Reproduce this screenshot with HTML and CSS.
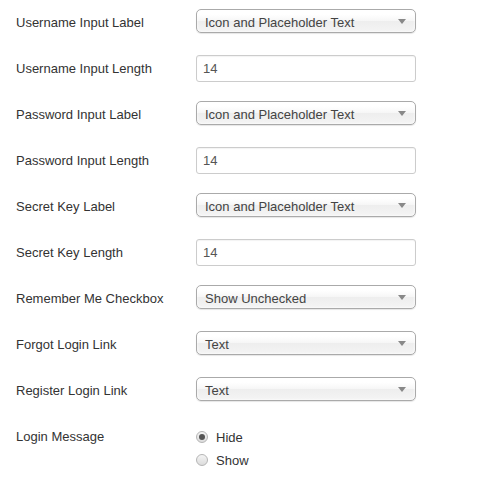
FILE: index.html
```html
<!DOCTYPE html>
<html>
<head>
<meta charset="utf-8">
<link rel="stylesheet" href="styles.css">
</head>
<body>
<form class="form">
  <div class="row sel"><div class="label">Username Input Label</div><div class="select"><span>Icon and Placeholder Text</span><i class="arrow"></i></div></div>
  <div class="row"><div class="label">Username Input Length</div><div class="input">14</div></div>
  <div class="row sel"><div class="label">Password Input Label</div><div class="select"><span>Icon and Placeholder Text</span><i class="arrow"></i></div></div>
  <div class="row"><div class="label">Password Input Length</div><div class="input">14</div></div>
  <div class="row sel"><div class="label">Secret Key Label</div><div class="select"><span>Icon and Placeholder Text</span><i class="arrow"></i></div></div>
  <div class="row"><div class="label">Secret Key Length</div><div class="input">14</div></div>
  <div class="row sel"><div class="label">Remember Me Checkbox</div><div class="select"><span>Show Unchecked</span><i class="arrow"></i></div></div>
  <div class="row sel"><div class="label">Forgot Login Link</div><div class="select"><span>Text</span><i class="arrow"></i></div></div>
  <div class="row sel"><div class="label">Register Login Link</div><div class="select"><span>Text</span><i class="arrow"></i></div></div>
  <div class="row radio-row">
    <div class="label">Login Message</div>
    <div class="radios">
      <div class="radio"><span class="dot checked"></span>Hide</div>
      <div class="radio"><span class="dot"></span>Show</div>
    </div>
  </div>
</form>
</body>
</html>
```
FILE: styles.css
```css
html, body {
  margin: 0;
  padding: 0;
  background: #fff;
}
body {
  font-family: "Liberation Sans", Arial, sans-serif;
  font-size: 13px;
  color: #333;
}
.form {
  padding: 9px 0 0 16px;
}
.row {
  display: grid;
  grid-template-columns: 180px 220px;
  align-items: center;
  align-content: start;
  height: 46px;
}
.label {
  color: #333;
  line-height: 18px;
}
.sel .label {
  padding-top: 3px;
}
.select {
  box-sizing: border-box;
  height: 24px;
  border: 1px solid #aaa;
  border-radius: 5px;
  background: linear-gradient(to bottom, #ffffff 20%, #f6f6f6 50%, #eeeeee 52%, #f4f4f4 100%);
  box-shadow: 0 0 3px #fff inset, 0 1px 1px rgba(0,0,0,0.1);
  display: flex;
  align-items: center;
  justify-content: space-between;
  padding: 3px 9px 0 8px;
  color: #444;
  line-height: 19px;
}
.arrow {
  width: 0;
  height: 0;
  border-left: 4px solid transparent;
  border-right: 4px solid transparent;
  border-top: 5px solid #888;
  margin-top: -3px;
}
.input {
  box-sizing: border-box;
  height: 27px;
  border: 1px solid #ccc;
  border-radius: 3px;
  padding: 0 6px;
  line-height: 25px;
  color: #555;
  box-shadow: inset 0 1px 1px rgba(0,0,0,0.05);
}
.radio-row {
  align-items: start;
  padding-top: 5px;
}
.radios {
  display: flex;
  flex-direction: column;
  gap: 5px;
  padding-left: 0;
}
.radio {
  display: flex;
  align-items: center;
  height: 18px;
  color: #333;
}
.dot {
  box-sizing: border-box;
  width: 12px;
  height: 12px;
  border-radius: 50%;
  border: 1px solid #b5b5b5;
  background: linear-gradient(to bottom, #f4f4f4, #dcdcdc);
  margin: 0 8px 0 0;
  position: relative;
}
.dot.checked::after {
  content: "";
  position: absolute;
  left: 2px;
  top: 2px;
  width: 6px;
  height: 6px;
  border-radius: 50%;
  background: #555;
}
```
